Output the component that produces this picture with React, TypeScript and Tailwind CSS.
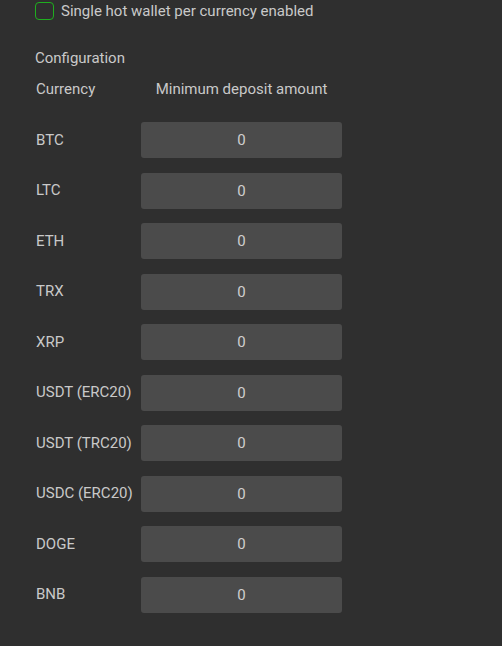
const currencies = [
    'BTC',
    'LTC',
    'ETH',
    'TRX',
    'XRP',
    'USDT (ERC20)',
    'USDT (TRC20)',
    'USDC (ERC20)',
    'DOGE',
    'BNB',
];

export default function App() {
    return (
        <div className="min-h-screen w-full bg-[#2f2f2f] text-[#c9c9c9] font-['Roboto',sans-serif]">
            <div className="pl-[35px] pt-[2px]">
                <label className="flex items-center gap-[7px] h-[18px]">
                    <span className="block h-[18px] w-[19px] rounded-[4px] border border-[#1fae1f]" />
                    <span className="text-[15px] leading-[18px]">Single hot wallet per currency enabled</span>
                </label>

                <div className="mt-[28px] text-[15px] leading-[20px]">Configuration</div>

                <div className="mt-[11px] grid grid-cols-[106px_201px] text-[15px] leading-[20px]">
                    <div className="pl-[1px]">Currency</div>
                    <div className="text-center">Minimum deposit amount</div>
                </div>

                <div className="mt-[23px] flex flex-col gap-[14.5px]">
                    {currencies.map((c) => (
                        <div key={c} className="grid grid-cols-[106px_201px] items-center">
                            <div className="pl-[1px] text-[15px]">{c}</div>
                            <input
                                readOnly
                                value="0"
                                className="h-[36px] w-full rounded-[3px] bg-[#4b4b4b] text-center text-[15px] text-[#cfcfcf] outline-none"
                            />
                        </div>
                    ))}
                </div>
            </div>
        </div>
    );
}
